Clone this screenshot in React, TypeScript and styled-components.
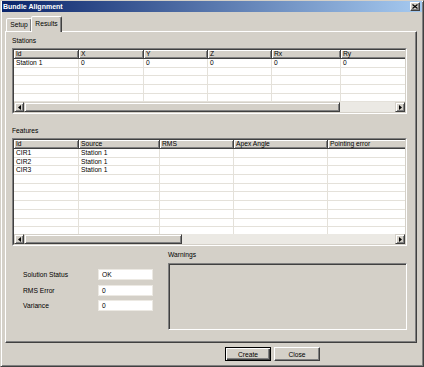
import React from "react";
import styled, { createGlobalStyle } from "styled-components";

const face = "#d4d0c8";
const shadow = "#808080";
const dark = "#404040";
const gridLine = "#e4e1da";

const GlobalStyle = createGlobalStyle`
  html, body {
    margin: 0;
    padding: 0;
    background: ${face};
  }
  body {
    font-family: "Liberation Sans", Arial, sans-serif;
    font-size: 6.7px;
    color: #000;
  }
  * {
    box-sizing: border-box;
  }
`;

interface Column {
  title: string;
  width: number;
}

const stationColumns: Column[] = [
  { title: "Id", width: 65 },
  { title: "X", width: 65 },
  { title: "Y", width: 64 },
  { title: "Z", width: 64 },
  { title: "Rx", width: 69 },
  { title: "Ry", width: 70 },
];

const featureColumns: Column[] = [
  { title: "Id", width: 65 },
  { title: "Source", width: 81 },
  { title: "RMS", width: 74 },
  { title: "Apex Angle", width: 94 },
  { title: "Pointing error", width: 80 },
];

const stationRows = [["Station 1", "0", "0", "0", "0", "0"]];
const featureRows = [
  ["CIR1", "Station 1", "", "", ""],
  ["CIR2", "Station 1", "", "", ""],
  ["CIR3", "Station 1", "", "", ""],
];

const Arrow: React.FC<{ dir: "left" | "right" }> = ({ dir }) => (
  <svg width="3" height="5" viewBox="0 0 3 5">
    {dir === "left" ? (
      <polygon points="3,0 3,5 0,2.5" fill="#000" />
    ) : (
      <polygon points="0,0 0,5 3,2.5" fill="#000" />
    )}
  </svg>
);

const Grid: React.FC<{
  columns: Column[];
  rows: string[][];
  rowCount: number;
  height: number;
  thumb: number;
}> = ({ columns, rows, rowCount, height, thumb }) => {
  const filled = Array.from({ length: rowCount }, (_, i) => rows[i] ?? columns.map(() => ""));
  return (
    <TableFrame $height={height}>
      <TableInner>
        <HeaderRow>
          {columns.map((c) => (
            <HeaderCell key={c.title} $width={c.width}>
              {c.title}
            </HeaderCell>
          ))}
        </HeaderRow>
        <TableBody>
          {filled.map((row, i) => (
            <BodyRow key={i}>
              {columns.map((c, j) => (
                <BodyCell key={c.title} $width={c.width}>
                  {row[j]}
                </BodyCell>
              ))}
            </BodyRow>
          ))}
        </TableBody>
        <ScrollBar>
          <ScrollButton>
            <Arrow dir="left" />
          </ScrollButton>
          <ScrollThumb $width={thumb} />
          <ScrollTrack />
          <ScrollButton>
            <Arrow dir="right" />
          </ScrollButton>
        </ScrollBar>
      </TableInner>
    </TableFrame>
  );
};

const fields = [
  { label: "Solution Status", value: "OK" },
  { label: "RMS Error", value: "0" },
  { label: "Variance", value: "0" },
];

const App: React.FC = () => {
  return (
    <>
      <GlobalStyle />
      <Window>
        <TitleBar>
          <span>Bundle Alignment</span>
          <CloseButton>
            <svg width="6" height="5" viewBox="0 0 6 5">
              <path d="M0.5 0.5 L5.5 4.5 M5.5 0.5 L0.5 4.5" stroke="#000" strokeWidth="1.2" />
            </svg>
          </CloseButton>
        </TitleBar>

        <TabStrip>
          <Tab>Setup</Tab>
          <Tab $active>Results</Tab>
        </TabStrip>

        <Panel>
          <SectionLabel>Stations</SectionLabel>
          <Grid columns={stationColumns} rows={stationRows} rowCount={6} height={66} thumb={316} />

          <SectionLabel $gap={12}>Features</SectionLabel>
          <Grid columns={featureColumns} rows={featureRows} rowCount={11} height={108} thumb={158} />

          <Bottom>
            <FieldList>
              {fields.map((f) => (
                <FieldRow key={f.label}>
                  <FieldLabel>{f.label}</FieldLabel>
                  <FieldBox>{f.value}</FieldBox>
                </FieldRow>
              ))}
            </FieldList>
            <WarningsColumn>
              <SectionLabel $gap={4}>Warnings</SectionLabel>
              <WarningsBox />
            </WarningsColumn>
          </Bottom>
        </Panel>

        <Footer>
          <Button $default>Create</Button>
          <Button>Close</Button>
        </Footer>
      </Window>
    </>
  );
};

export default App;

const Window = styled.div`
  width: 424px;
  height: 367px;
  background: ${face};
  border: 1px solid;
  border-color: ${face} ${dark} ${dark} ${face};
  box-shadow: inset 1px 1px #fff, inset -1px -1px ${shadow};
  display: flex;
  flex-direction: column;
`;

const TitleBar = styled.div`
  height: 11px;
  margin: 0 1px;
  padding: 0 2px 0 1px;
  display: flex;
  align-items: center;
  justify-content: space-between;
  background: linear-gradient(to right, #0a246a, #a6caf0);
  color: #fff;
  font-weight: bold;
  font-size: 7px;
`;

const CloseButton = styled.div`
  width: 10px;
  height: 9px;
  display: flex;
  align-items: center;
  justify-content: center;
  background: ${face};
  border: 1px solid;
  border-color: #fff ${dark} ${dark} #fff;
  box-shadow: inset -1px -1px ${shadow};
`;

const TabStrip = styled.div`
  height: 15px;
  margin: 4px 0 0 4px;
  display: flex;
  align-items: flex-end;
`;

const Tab = styled.div<{ $active?: boolean }>`
  position: relative;
  z-index: ${(p) => (p.$active ? 1 : 0)};
  width: ${(p) => (p.$active ? 31 : 26)}px;
  height: ${(p) => (p.$active ? 16 : 13)}px;
  margin-left: ${(p) => (p.$active ? -1 : 1)}px;
  margin-bottom: ${(p) => (p.$active ? -1 : 0)}px;
  padding-top: ${(p) => (p.$active ? 3 : 2)}px;
  text-align: center;
  background: ${face};
  border: 1px solid;
  border-bottom: none;
  border-color: #fff ${dark} transparent #fff;
  border-radius: 2px 2px 0 0;
  box-shadow: inset -1px 0 ${shadow};
`;

const Panel = styled.div`
  height: 312px;
  margin: 0 6px 0 4px;
  padding: 4px 9px 0 6px;
  background: ${face};
  border: 1px solid;
  border-color: #fff ${dark} ${dark} #fff;
  box-shadow: inset -1px -1px ${shadow};
`;

const SectionLabel = styled.div<{ $gap?: number }>`
  height: 9px;
  line-height: 9px;
  margin-top: ${(p) => p.$gap ?? 0}px;
  margin-bottom: 3px;
`;

const TableFrame = styled.div<{ $height: number }>`
  height: ${(p) => p.$height}px;
  border: 1px solid;
  border-color: ${shadow} #fff #fff ${shadow};
`;

const TableInner = styled.div`
  height: 100%;
  display: flex;
  flex-direction: column;
  border: 1px solid;
  border-color: ${dark} ${face} ${face} ${dark};
  background: #fff;
  overflow: hidden;
`;

const HeaderRow = styled.div`
  display: flex;
  flex: none;
  height: 9px;
`;

const HeaderCell = styled.div<{ $width: number }>`
  flex: none;
  width: ${(p) => p.$width}px;
  height: 9px;
  line-height: 8px;
  padding-left: 2px;
  background: ${face};
  border-right: 1px solid ${dark};
  border-bottom: 1px solid ${dark};
  box-shadow: inset 1px 1px #fff, inset -1px -1px ${shadow};
  white-space: nowrap;
  overflow: hidden;
`;

const TableBody = styled.div`
  flex: 1;
  overflow: hidden;
  background: #fff;
`;

const BodyRow = styled.div`
  display: flex;
  height: 8.7px;
`;

const BodyCell = styled.div<{ $width: number }>`
  flex: none;
  width: ${(p) => p.$width}px;
  height: 100%;
  line-height: 8px;
  padding-left: 2px;
  border-right: 1px solid ${gridLine};
  border-bottom: 1px solid ${gridLine};
  white-space: nowrap;
`;

const ScrollBar = styled.div`
  flex: none;
  height: 10px;
  display: flex;
`;

const raised = `
  background: ${face};
  border: 1px solid;
  border-color: ${face} ${dark} ${dark} ${face};
  box-shadow: inset 1px 1px #fff, inset -1px -1px ${shadow};
`;

const ScrollButton = styled.div`
  ${raised}
  flex: none;
  width: 10px;
  height: 10px;
  display: flex;
  align-items: center;
  justify-content: center;
`;

const ScrollThumb = styled.div<{ $width: number }>`
  ${raised}
  flex: none;
  width: ${(p) => p.$width}px;
  height: 10px;
`;

const ScrollTrack = styled.div`
  flex: 1;
  background: #ebe9e4;
`;

const Bottom = styled.div`
  display: grid;
  grid-template-columns: 156px 1fr;
`;

const FieldList = styled.div`
  padding-top: 23px;
  display: flex;
  flex-direction: column;
  gap: 4.5px;
`;

const FieldRow = styled.div`
  display: grid;
  grid-template-columns: 86px 55px;
  align-items: center;
`;

const FieldLabel = styled.div`
  padding-left: 11px;
`;

const FieldBox = styled.div`
  height: 11px;
  line-height: 10px;
  padding-left: 3px;
  background: #fff;
  border: 1px solid #ece9e3;
`;

const WarningsColumn = styled.div`
  display: flex;
  flex-direction: column;
`;

const WarningsBox = styled.div`
  height: 67px;
  margin-top: 1px;
  border: 1px solid;
  border-color: ${shadow} #fff #fff ${shadow};
  box-shadow: inset 1px 1px ${dark}, inset -1px -1px ${face};
`;

const Footer = styled.div`
  display: flex;
  gap: 3px;
  margin: 4px 0 0 224px;
`;

const Button = styled.div<{ $default?: boolean }>`
  width: 46px;
  height: 14px;
  display: flex;
  align-items: center;
  justify-content: center;
  background: ${face};
  border: 1px solid;
  border-color: ${(p) => (p.$default ? "#000" : `#fff ${dark} ${dark} #fff`)};
  box-shadow: ${(p) =>
    p.$default
      ? `inset 1px 1px #fff, inset -1px -1px ${dark}, inset -2px -2px ${shadow}`
      : `inset -1px -1px ${shadow}`};
`;
